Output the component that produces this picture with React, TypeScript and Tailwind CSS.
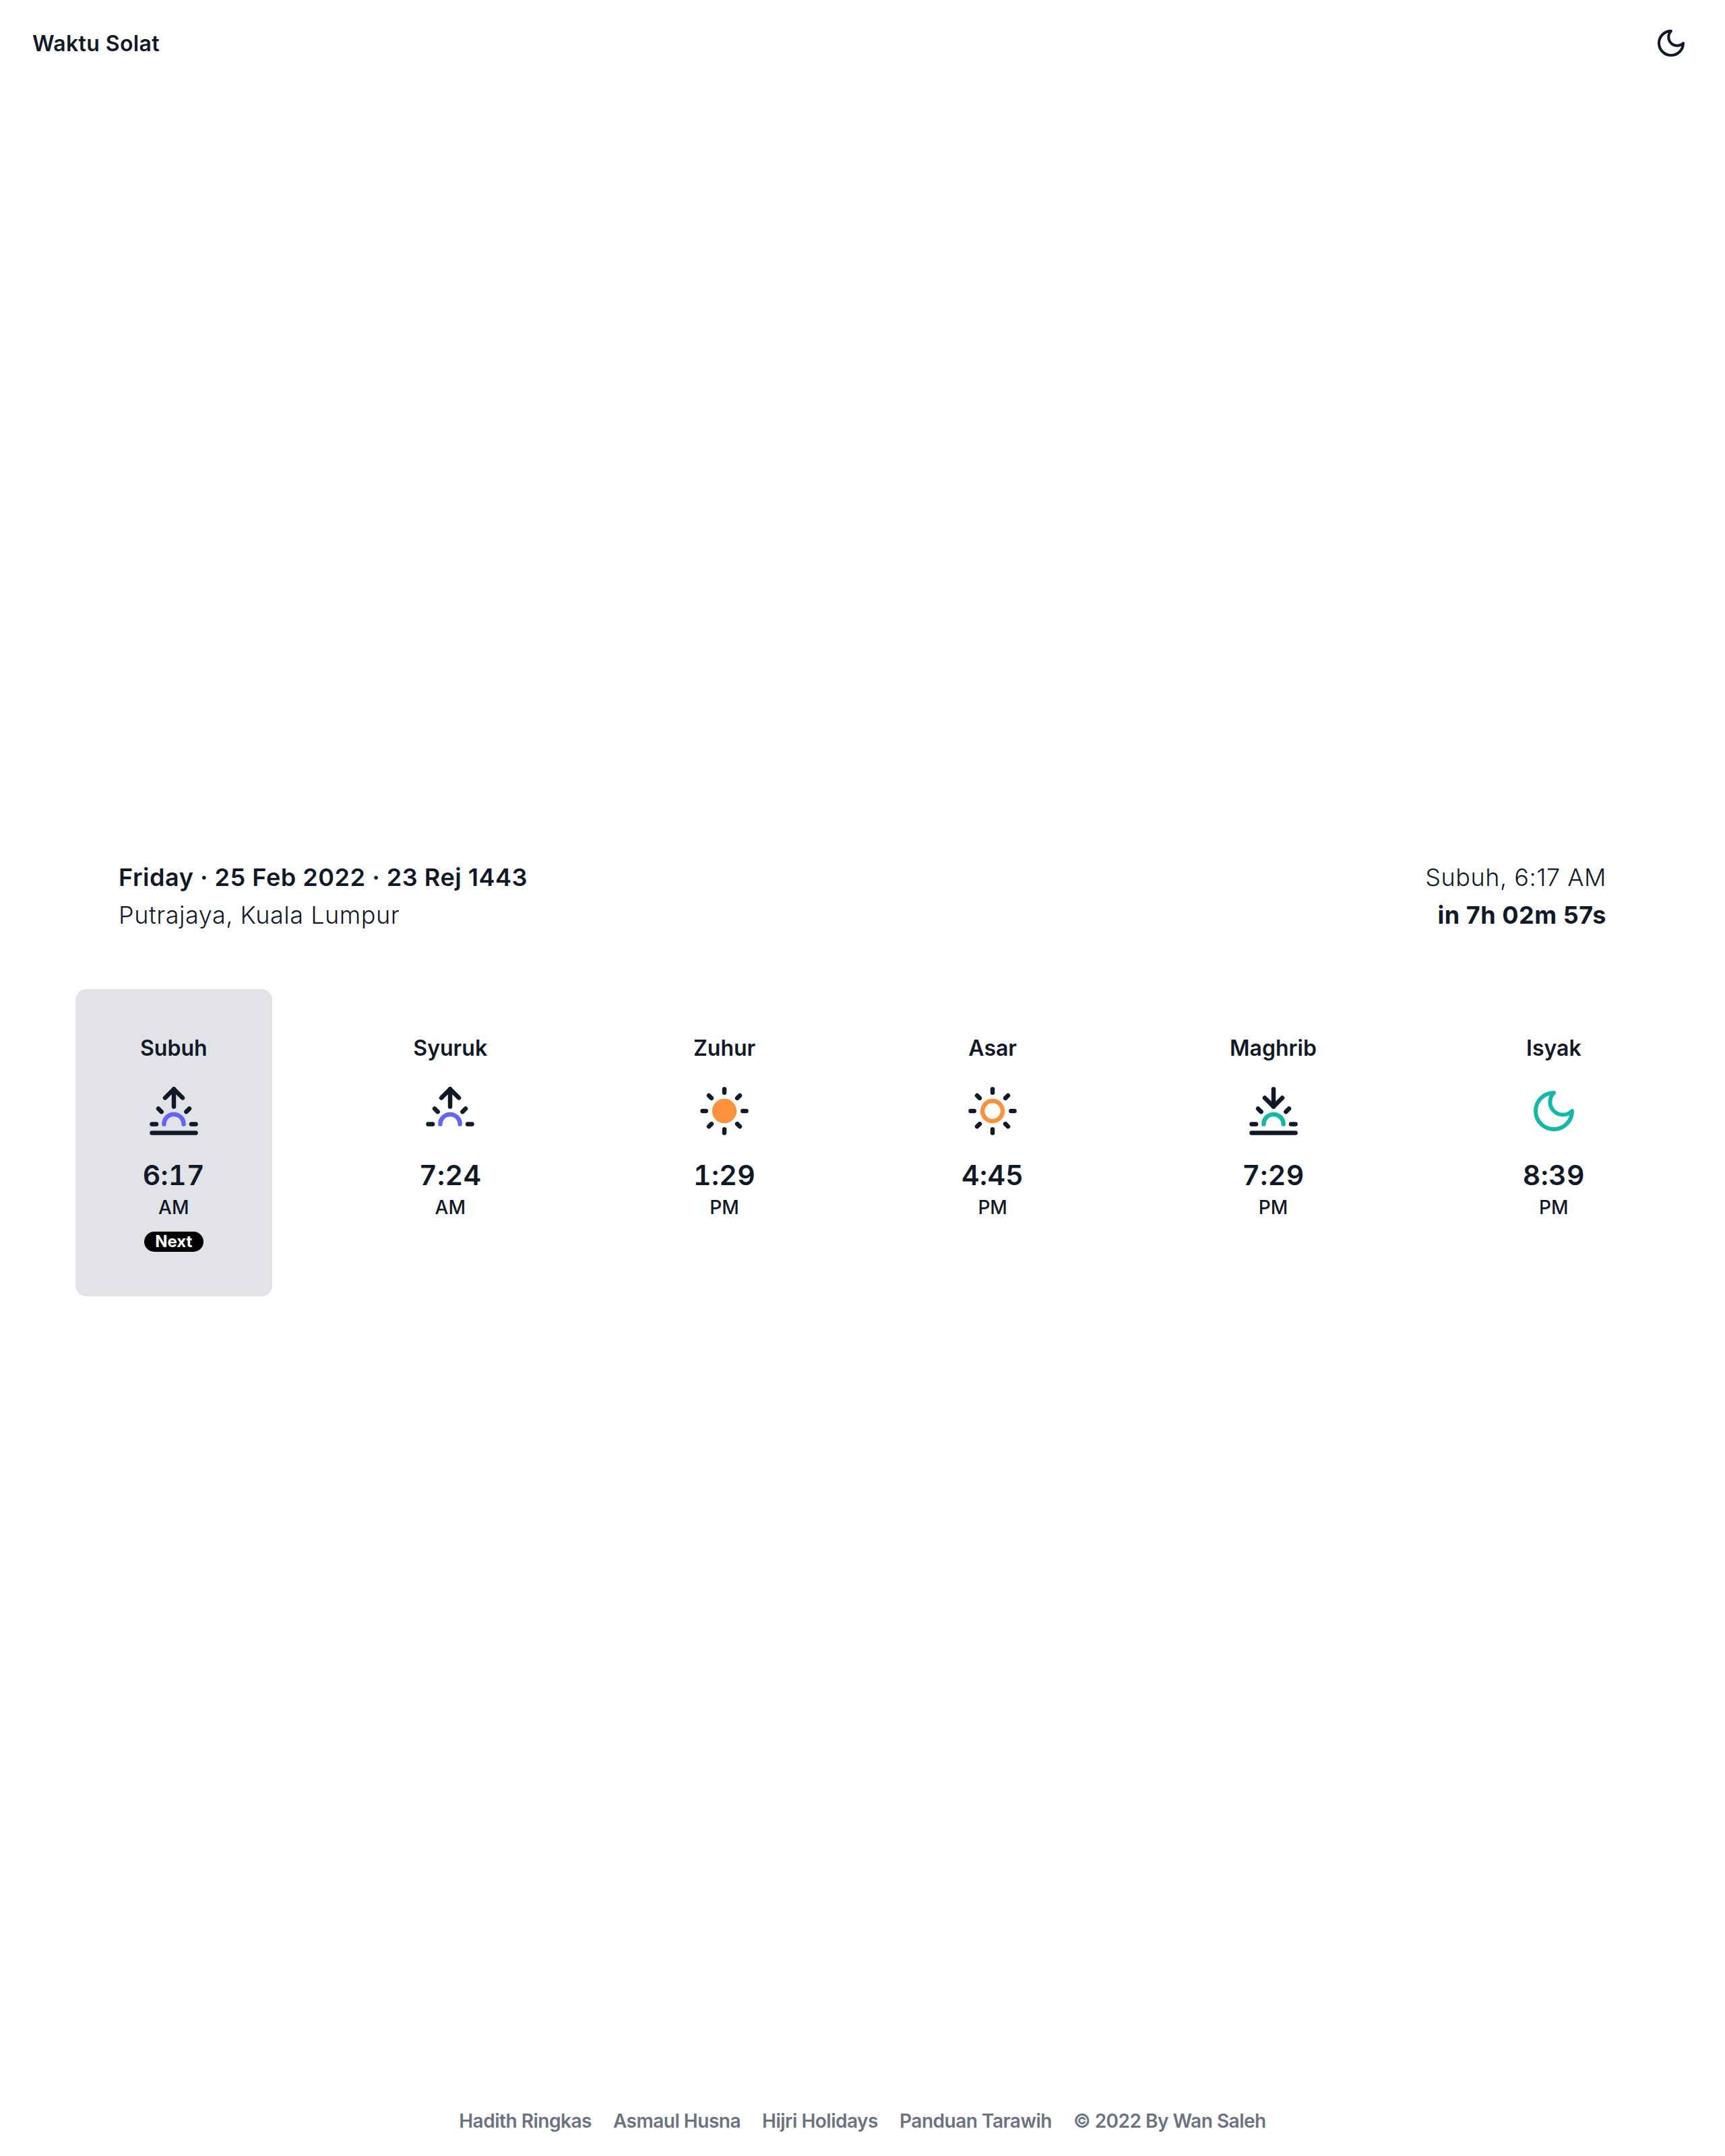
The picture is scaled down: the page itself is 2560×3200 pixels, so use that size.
import React from 'react';

const ink = '#111827';

const Icon: React.FC<{ size?: string; children: React.ReactNode }> = ({ size = 'w-[78px] h-[78px]', children }) => (
  <svg
    viewBox="0 0 24 24"
    fill="none"
    stroke={ink}
    strokeWidth={2}
    strokeLinecap="round"
    strokeLinejoin="round"
    className={size}
  >
    {children}
  </svg>
);

const Rise: React.FC<{ line?: boolean }> = ({ line = true }) => (
  <Icon>
    <path d="M12 2v8" />
    <path d="m8 6 4-4 4 4" />
    <path d="m4.93 10.93 1.41 1.41" />
    <path d="m19.07 10.93-1.41 1.41" />
    <path d="M2 18h2" />
    <path d="M20 18h2" />
    {line && <path d="M22 22H2" />}
    <path d="M16.5 18a4.5 4.5 0 0 0-9 0" stroke="#6366f1" />
  </Icon>
);

const Set: React.FC = () => (
  <Icon>
    <path d="M12 10V2" />
    <path d="m16 6-4 4-4-4" />
    <path d="m4.93 10.93 1.41 1.41" />
    <path d="m19.07 10.93-1.41 1.41" />
    <path d="M2 18h2" />
    <path d="M20 18h2" />
    <path d="M22 22H2" />
    <path d="M16.5 18a4.5 4.5 0 0 0-9 0" stroke="#14b8a6" />
  </Icon>
);

const Sun: React.FC<{ filled?: boolean }> = ({ filled }) => (
  <Icon>
    <path d="M12 2v1.6" />
    <path d="M12 20.4V22" />
    <path d="m4.93 4.93 1.2 1.2" />
    <path d="m17.87 17.87 1.2 1.2" />
    <path d="M2 12h1.6" />
    <path d="M20.4 12H22" />
    <path d="m6.13 17.87-1.2 1.2" />
    <path d="m19.07 4.93-1.2 1.2" />
    <circle cx="12" cy="12" r="4.6" stroke="#fb923c" fill={filled ? '#fb923c' : 'none'} />
  </Icon>
);

const Moon: React.FC<{ color?: string; size: string }> = ({ color = ink, size }) => (
  <svg
    viewBox="0 0 24 24"
    fill="none"
    stroke={color}
    strokeWidth={2}
    strokeLinecap="round"
    strokeLinejoin="round"
    className={size}
  >
    <path d="M12 3a6 6 0 0 0 9 9 9 9 0 1 1-9-9Z" />
  </svg>
);

const prayers = [
  { name: 'Subuh', icon: <Rise />, time: '6:17', period: 'AM', next: true },
  { name: 'Syuruk', icon: <Rise line={false} />, time: '7:24', period: 'AM' },
  { name: 'Zuhur', icon: <Sun filled />, time: '1:29', period: 'PM' },
  { name: 'Asar', icon: <Sun />, time: '4:45', period: 'PM' },
  { name: 'Maghrib', icon: <Set />, time: '7:29', period: 'PM' },
  { name: 'Isyak', icon: <Moon color="#14b8a6" size="w-[72px] h-[72px]" />, time: '8:39', period: 'PM' },
];

const links = ['Hadith Ringkas', 'Asmaul Husna', 'Hijri Holidays', 'Panduan Tarawih', '© 2022 By Wan Saleh'];

export default function App() {
  return (
    <div className="h-screen flex flex-col bg-white text-[#111827] font-['Inter',sans-serif]">
      <header className="h-[128px] shrink-0 flex items-center justify-between pl-12 pr-[56px]">
        <h1 className="text-[32px] font-semibold tracking-[0.012em] pt-px">Waktu Solat</h1>
        <Moon size="w-12 h-12" />
      </header>

      <main className="flex-1 flex flex-col justify-center px-[112px] pb-[58px]">
        <div className="flex justify-between px-16 text-[36px] leading-[56px] tracking-[0.015em]">
          <div>
            <p className="font-semibold">Friday · 25 Feb 2022 · 23 Rej 1443</p>
            <p className="font-light">Putrajaya, Kuala Lumpur</p>
          </div>
          <div className="text-right">
            <p className="font-light">Subuh, 6:17 AM</p>
            <p className="font-bold">in 7h 02m 57s</p>
          </div>
        </div>

        <div className="mt-[82px] flex justify-between">
          {prayers.map((p) => (
            <div
              key={p.name}
              className={`flex flex-col items-center rounded-2xl px-24 pt-16 h-[456px] ${p.next ? 'bg-[#e1e3e7]' : ''}`}
            >
              <p className="text-[32px] leading-[48px] font-semibold">{p.name}</p>
              <div className="mt-[30px] h-[78px] flex items-center">{p.icon}</div>
              <p className="mt-[28px] text-[41px] leading-[56px] font-semibold tabular-nums tracking-[0.01em]">{p.time}</p>
              <p className="text-[28px] leading-[40px] font-medium">{p.period}</p>
              {p.next && (
                <span className="mt-[16px] h-[30px] w-[88px] flex items-center justify-center rounded-full bg-black text-white text-[24px] leading-none font-bold">
                  Next
                </span>
              )}
            </div>
          ))}
        </div>
      </main>

      <footer className="h-[72px] shrink-0 flex justify-center gap-8 text-[28px] leading-[40px] font-semibold tracking-[-0.0175em] text-[#6b7280]">
        {links.map((l) => (
          <span key={l}>{l}</span>
        ))}
      </footer>
    </div>
  );
}
